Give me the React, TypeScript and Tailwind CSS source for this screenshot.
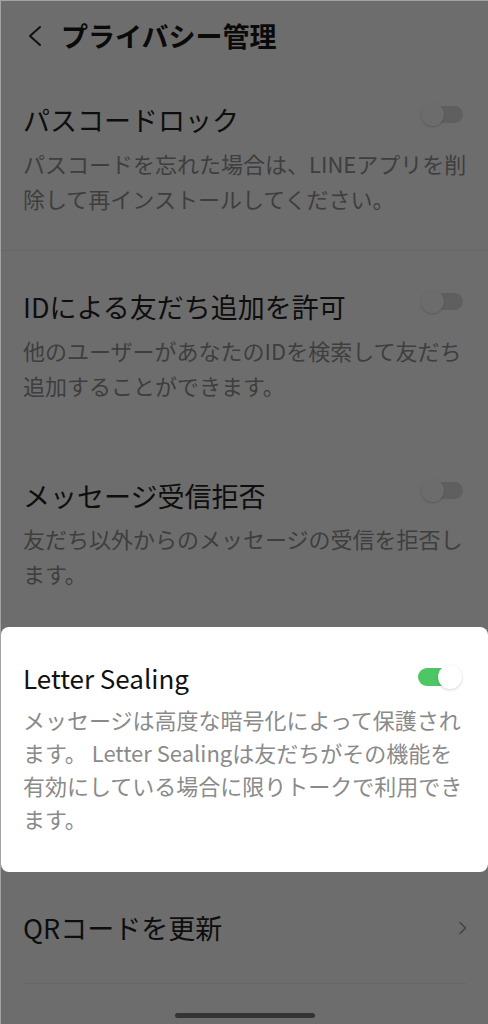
const font = { fontFamily: '"Noto Sans CJK JP", "Noto Sans", sans-serif' };

type Item = { title: string; desc: string; pt: string; descMt: string; pb: string; divider: boolean };

const dimmedItems: Item[] = [
  {
    title: "パスコードロック",
    desc: "パスコードを忘れた場合は、LINEアプリを削除して再インストールしてください。",
    pt: "pt-[32px]",
    descMt: "mt-[8px]",
    pb: "pb-[34px]",
    divider: true,
  },
  {
    title: "IDによる友だち追加を許可",
    desc: "他のユーザーがあなたのIDを検索して友だち追加することができます。",
    pt: "pt-[38px]",
    descMt: "mt-[8px]",
    pb: "pb-[34px]",
    divider: false,
  },
  {
    title: "メッセージ受信拒否",
    desc: "友だち以外からのメッセージの受信を拒否します。",
    pt: "pt-[41px]",
    descMt: "mt-[7px]",
    pb: "pb-[36px]",
    divider: false,
  },
];

function OffSwitch() {
  return (
    <div className="relative w-[42px] h-[23px] mb-[12px] mr-[3px] shrink-0">
      <div className="absolute right-0 top-[3px] w-[34px] h-[17px] rounded-full bg-[#5f5f5f]" />
      <div className="absolute left-0 top-0 w-[23px] h-[23px] rounded-full bg-[#6c6c6c] shadow-[0_1px_2px_rgba(0,0,0,0.18)]" />
    </div>
  );
}

function OnSwitch() {
  return (
    <div className="relative w-[44px] h-[24px] mb-[2px] mr-[4px] shrink-0">
      <div className="absolute left-0 top-[3px] w-[36px] h-[18px] rounded-full bg-[#4cc764]" />
      <div className="absolute right-0 top-0 w-[24px] h-[24px] rounded-full bg-white shadow-[0_1px_3px_rgba(0,0,0,0.18)]" />
    </div>
  );
}

export default function App() {
  return (
    <div
      className="w-[488px] h-[1024px] overflow-hidden bg-[#6d6d6d] border-l border-t border-[#a3a3a3] flex flex-col"
      style={font}
    >
      <header className="h-[69px] flex items-center pl-[26px] gap-[18px] shrink-0">
        <svg width="16" height="22" viewBox="0 0 16 22" fill="none">
          <polyline points="13,2 3,11 13,20" stroke="#111" strokeWidth="2" strokeLinecap="round" strokeLinejoin="round" />
        </svg>
        <h1 className="text-[27px] font-bold text-[#0a0a0a] leading-[36px]">プライバシー管理</h1>
      </header>

      {dimmedItems.map((item) => (
        <section
          key={item.title}
          className={`px-[22px] ${item.pt} ${item.pb} ${item.divider ? "border-b border-[#666666]" : ""}`}
        >
          <div className="h-[36px] flex items-center justify-between">
            <h2 className="text-[27px] leading-[36px] text-[#0e0e0e]">{item.title}</h2>
            <OffSwitch />
          </div>
          <p className={`${item.descMt} w-[450px] text-[22px] leading-[35px] text-[#3e3e3e]`}>{item.desc}</p>
        </section>
      ))}

      <section className="bg-white rounded-[8px] px-[22px] pt-[33px] pb-[37px]">
        <div className="h-[36px] flex items-center justify-between">
          <h2 className="text-[26px] leading-[36px] text-[#111111]">Letter Sealing</h2>
          <OnSwitch />
        </div>
        <p className="mt-[7px] w-[450px] text-[22px] leading-[33px] text-[#8a8a8a]">
          メッセージは高度な暗号化によって保護されます。 Letter Sealingは友だちがその機能を有効にしている場合に限りトークで利用できます。
        </p>
      </section>

      <section className="mx-[22px] pt-[38px] pb-[37px] border-b border-[#666666]">
        <div className="h-[36px] flex items-center justify-between">
          <h2 className="text-[27px] leading-[36px] text-[#0e0e0e]">QRコードを更新</h2>
          <svg width="10" height="14" viewBox="0 0 10 14" fill="none" className="mr-[-2px]">
            <polyline points="2,1.5 7.5,7 2,12.5" stroke="#444" strokeWidth="1.6" strokeLinecap="round" strokeLinejoin="round" />
          </svg>
        </div>
      </section>

      <div className="flex-1 flex justify-center pt-[29px]">
        <div className="w-[140px] h-[5px] rounded-full bg-[#343434]" />
      </div>
    </div>
  );
}
